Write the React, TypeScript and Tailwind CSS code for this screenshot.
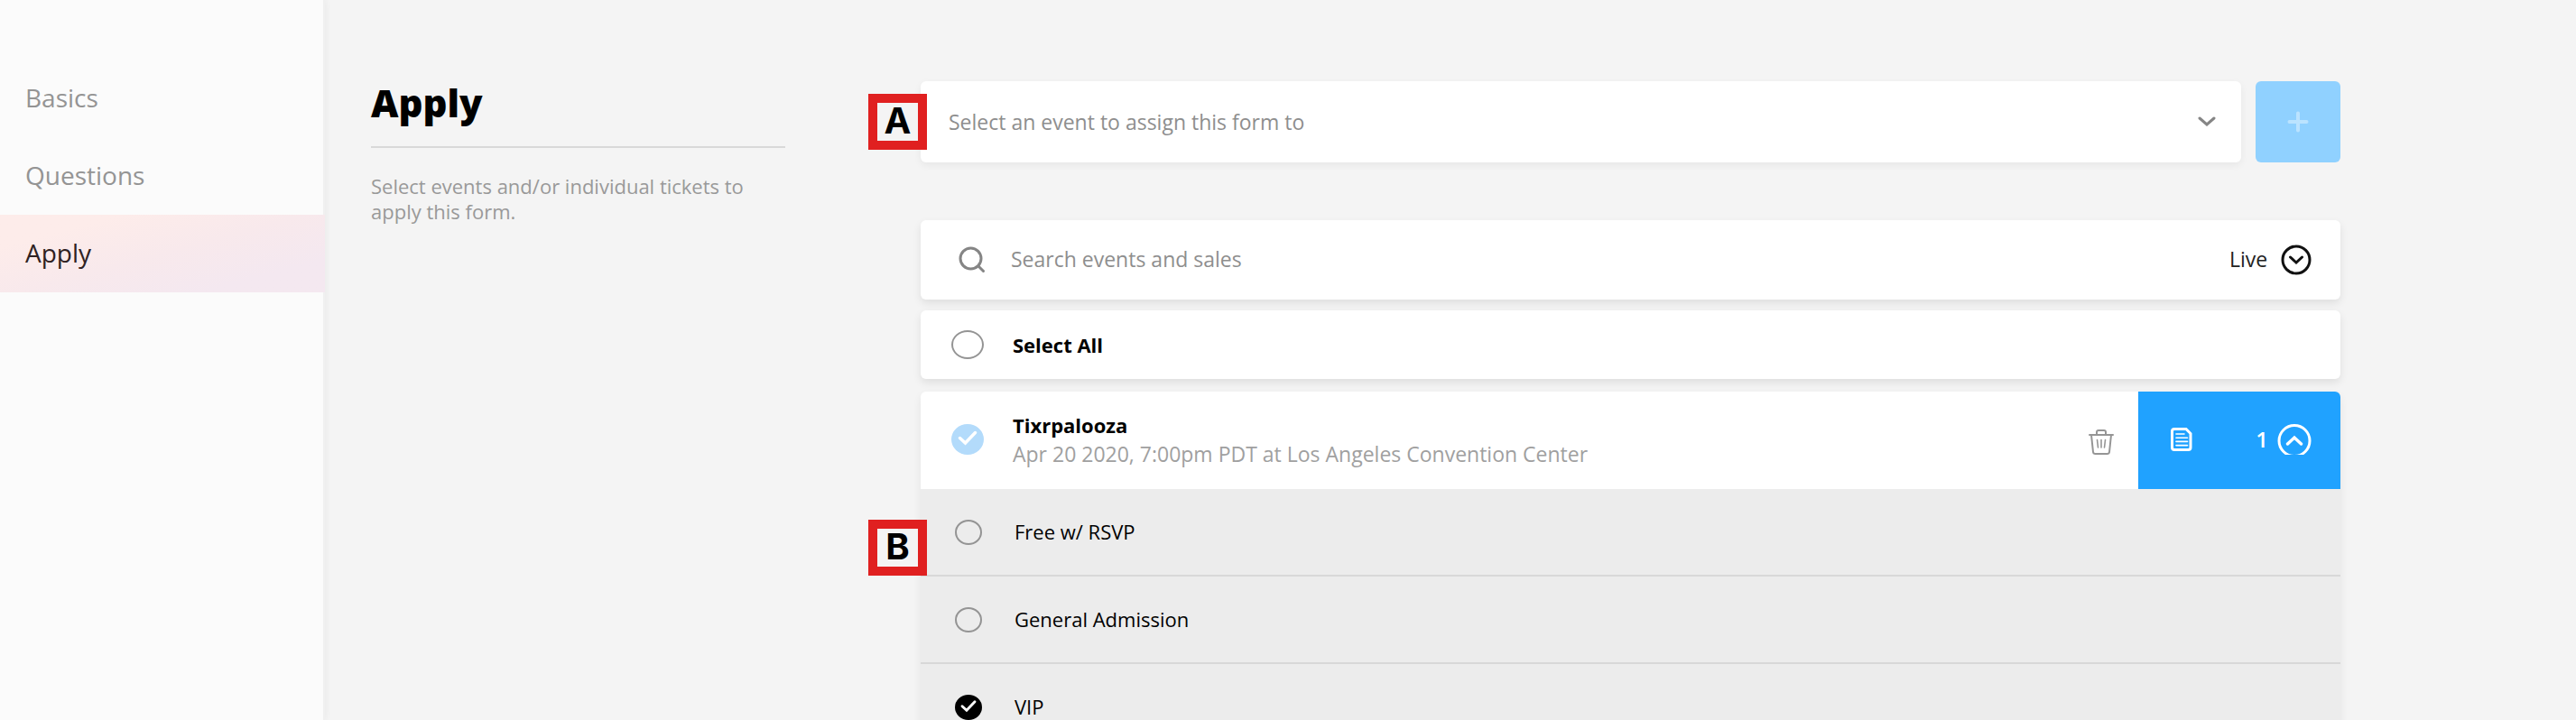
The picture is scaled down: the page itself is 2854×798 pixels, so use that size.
import { useState } from 'react';
import type { ReactNode } from 'react';

const navItems = ['Basics', 'Questions', 'Apply'];

const ticketList = [
  { id: 'free', name: 'Free w/ RSVP' },
  { id: 'general', name: 'General Admission' },
  { id: 'vip', name: 'VIP' },
];

function Marker({ children, className }: { children: ReactNode; className: string }) {
  return (
    <span
      className={`absolute -left-[58px] flex h-[62px] w-[65px] justify-center border-10 border-[#e02020] bg-[#f4f4f4] font-['Inter',sans-serif] text-[40px] leading-10 font-bold text-black ${className}`}
    >
      {children}
    </span>
  );
}

function Sidebar() {
  return (
    <nav className="w-[360px] shrink-0 border-r-2 border-[#f0f0f0] bg-[#fbfbfb] pt-[66px] shadow-[0_0_8px_rgba(0,0,0,0.06)]">
      {navItems.map((item) => (
        <a
          key={item}
          href={`#${item.toLowerCase()}`}
          className={
            item === 'Apply'
              ? '-mr-0.5 flex h-[86px] items-center bg-linear-165 from-[#fdecea] from-20% via-[#f8e9ec] via-50% to-[#f4e8f0] to-80% px-7 pb-0.5 text-[28px] text-[#2f2222]'
              : 'flex h-[86px] items-center px-7 pb-0.5 text-[28px] text-[#949494]'
          }
        >
          {item}
        </a>
      ))}
    </nav>
  );
}

function ChevronCircle({ up = false }: { up?: boolean }) {
  return up ? (
    <svg className="h-[34px] w-[38px]" viewBox="0 0 38 34" fill="none" stroke="currentColor" aria-hidden="true">
      <circle cx="19" cy="18.500" r="17" strokeWidth="3" />
      <path d="M11.500 22L19 15L26.500 22" strokeWidth="3.400" strokeLinecap="round" />
    </svg>
  ) : (
    <svg className="pointer-events-none h-[34px] w-[34px]" viewBox="0 0 34 34" fill="none" stroke="currentColor" aria-hidden="true">
      <circle cx="17" cy="17" r="15" strokeWidth="3" />
      <path d="M10.500 14L17 20L23.500 14" strokeWidth="3" strokeLinecap="round" />
    </svg>
  );
}

function CheckMark() {
  return (
    <svg
      className="pointer-events-none invisible col-start-1 row-start-1 h-full w-full text-white peer-checked:visible"
      viewBox="0 0 34 34"
      fill="none"
      stroke="currentColor"
      strokeWidth="3.500"
      strokeLinecap="round"
      aria-hidden="true"
    >
      <path d="M8.500 15.500L14.500 21L25.500 9.500" />
    </svg>
  );
}

export default function App() {
  const [search, setSearch] = useState('');
  const [selected, setSelected] = useState<string[]>(['vip']);

  const toggleTicket = (id: string) => {
    setSelected((prev) => (prev.includes(id) ? prev.filter((t) => t !== id) : [...prev, id]));
  };

  return (
    <div className="flex h-screen overflow-hidden bg-[#f4f4f4] font-['Open_Sans','Noto_Sans',sans-serif] text-[22px] text-[#111]">
      <Sidebar />

      <main className="flex flex-1 items-start gap-[150px] pt-[90px] pr-[261px] pl-[51px]">
        <header className="w-[459px] shrink-0">
          <h1 className="border-b-2 border-[#d8d8d8] pb-6 text-[42px] leading-[48px] font-extrabold text-black">Apply</h1>
          <p className="pt-7 leading-7 text-[#999]">Select events and/or individual tickets to apply this form.</p>
        </header>

        <div className="min-w-0 flex-1">
          {/* Event picker */}
          <div className="relative flex gap-4">
            <div className="relative flex h-[90px] flex-1 items-center rounded-md bg-white shadow-[0_3px_8px_rgba(0,0,0,0.06)]">
              <select aria-label="Event" className="h-full w-full appearance-none px-[31px] text-[23px] text-[#8e8e8e] outline-none">
                <option>Select an event to assign this form to</option>
              </select>
              <svg className="pointer-events-none absolute right-7 h-5 w-5" viewBox="0 0 20 20" fill="none" stroke="#858585" strokeWidth="3" strokeLinecap="round" aria-hidden="true">
                <path d="M2 6L10 13L18 6" />
              </svg>
            </div>
            <button type="button" aria-label="Add event" className="flex h-[90px] w-[94px] items-center justify-center rounded-md bg-[#90d1ff] text-[#bbe3ff]">
              <svg className="h-6 w-6" viewBox="0 0 24 24" stroke="currentColor" strokeWidth="4" strokeLinecap="round" aria-hidden="true">
                <path d="M12 2.500V21.500M2.500 12H21.500" />
              </svg>
            </button>
            <Marker className="top-3.5">A</Marker>
          </div>

          {/* Search */}
          <div className="mt-16 flex h-[88px] items-center rounded-md bg-white pr-8 pl-[42px] text-[23px] shadow-[0_4px_10px_rgba(0,0,0,0.09)]">
            <svg className="h-[30px] w-[30px] shrink-0" viewBox="0 0 30 30" fill="none" stroke="#858585" strokeWidth="3" strokeLinecap="round" aria-hidden="true">
              <circle cx="13.500" cy="13.500" r="11.500" />
              <path d="M22 22L27.500 27.500" />
            </svg>
            <input
              type="text"
              aria-label="Search events and sales"
              placeholder="Search events and sales"
              value={search}
              onChange={(e) => setSearch(e.target.value)}
              className="ml-7 h-full min-w-0 flex-1 pb-0.5 outline-none placeholder:text-[#8e8e8e]"
            />
            <select aria-label="Status" className="mr-3.5 appearance-none pb-0.5 text-[#222] outline-none">
              <option>Live</option>
            </select>
            <ChevronCircle />
          </div>

          {/* Select all */}
          <label className="mt-3 flex h-[76px] items-center gap-8 rounded-md bg-white pl-[34px] font-bold text-black shadow-[0_4px_10px_rgba(0,0,0,0.09)]">
            <input
              type="checkbox"
              className="h-8 w-9 appearance-none rounded-[50%] border-2 border-[#949494] checked:border-black checked:bg-black"
              checked={selected.length === ticketList.length}
              onChange={(e) => setSelected(e.target.checked ? ticketList.map((t) => t.id) : [])}
            />
            Select All
          </label>

          {/* Event with its tickets */}
          <section className="mt-3.5 rounded-t-md shadow-[0_4px_10px_rgba(0,0,0,0.07)]">
            <div className="flex h-[108px] items-center overflow-hidden rounded-t-md bg-white pl-[34px]">
              <label className="flex flex-1 items-center gap-8 pb-0.5">
                <span className="grid h-[34px] w-9">
                  <input type="checkbox" defaultChecked className="peer col-start-1 row-start-1 appearance-none rounded-[50%] border-2 border-[#949494] checked:border-[#b3dbfb] checked:bg-[#b3dbfb]" />
                  <CheckMark />
                </span>
                <span className="flex flex-col leading-8">
                  <span className="font-bold text-black">Tixrpalooza</span>
                  <span className="text-[23px] text-[#a0a0a0]">Apr 20 2020, 7:00pm PDT at Los Angeles Convention Center</span>
                </span>
              </label>

              <button type="button" aria-label="Delete event" className="mt-1 mr-[27px] text-[#959595]">
                <svg className="h-7 w-7" viewBox="0 0 28 28" fill="none" stroke="currentColor" strokeWidth="2" strokeLinecap="round" strokeLinejoin="round" aria-hidden="true">
                  <path d="M1 6H27M9 6V3Q9 1 11 1H17Q19 1 19 3V6" />
                  <path d="M3 6L5 25Q5.200 27 7.500 27H20.500Q22.800 27 23 25L25 6" />
                  <path d="M9.500 11.500L10.500 20M14 11.500V20M18.500 11.500L17.500 20" strokeWidth="1.600" />
                </svg>
              </button>

              <div className="flex h-full w-56 items-center bg-[#20a2ff] pr-8 pb-0.5 pl-9 text-white">
                <button type="button" aria-label="View form">
                  <svg className="h-[26px] w-6" viewBox="0 0 24 26" fill="none" stroke="currentColor" aria-hidden="true">
                    <path d="M4 1.500H17L22 6.500V22Q22 24.500 19.500 24.500H4Q1.500 24.500 1.500 22V4Q1.500 1.500 4 1.500Z" strokeWidth="3" />
                    <path d="M6 7H15M6 11.200H18.500M6 15.400H18.500M6 19.600H18.500" strokeWidth="1.600" strokeLinecap="round" />
                  </svg>
                </button>
                <button type="button" aria-label="Collapse tickets" className="ml-auto flex items-center gap-2.5 text-2xl font-semibold">
                  {selected.length}
                  <ChevronCircle up />
                </button>
              </div>
            </div>

            <ul className="relative bg-[#ececec]">
              {ticketList.map(({ id, name }) => (
                <li key={id} className="border-b-2 border-[#d8d8d8]">
                  <label className="flex h-[95px] items-center gap-9 pl-[38px] text-black">
                    <span className="grid h-7 w-[30px]">
                      <input
                        type="checkbox"
                        checked={selected.includes(id)}
                        onChange={() => toggleTicket(id)}
                        className="peer col-start-1 row-start-1 appearance-none rounded-[50%] border-2 border-[#949494] checked:border-black checked:bg-black"
                      />
                      <CheckMark />
                    </span>
                    {name}
                  </label>
                </li>
              ))}
              <Marker className="top-[34px]">B</Marker>
            </ul>
          </section>
        </div>
      </main>
    </div>
  );
}
